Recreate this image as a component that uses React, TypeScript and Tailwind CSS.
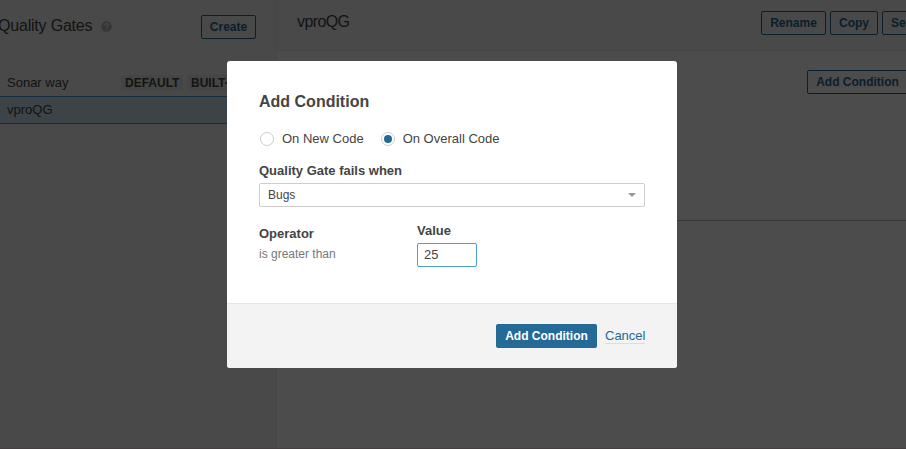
import type { ReactNode } from "react";

function OutlineButton({ children, className = "justify-center" }: { children: ReactNode; className?: string }) {
  return (
    <button
      className={`flex h-6 shrink-0 items-center whitespace-nowrap rounded-[2px] border border-[#236a97] text-xs font-bold text-[#236a97] ${className}`}
    >
      {children}
    </button>
  );
}

function Badge({ children, className = "" }: { children: ReactNode; className?: string }) {
  return (
    <span
      className={`flex h-4 shrink-0 items-center whitespace-nowrap rounded-[2px] bg-[#e6e6e6] pl-1 text-xs font-bold text-[#444] ${className}`}
    >
      {children}
    </span>
  );
}

function HelpIcon() {
  return (
    <svg className="ml-[9px] size-[11px]" viewBox="0 0 16 16">
      <circle cx="8" cy="8" r="7.6" fill="#b4b4b4" />
      <path d="M5.4 6.3C5.4 4.7 6.5 3.8 8 3.8s2.6.9 2.6 2.3C10.6 7.8 8 7.8 8 9.7" fill="none" stroke="#f3f3f3" strokeWidth="1.9" />
      <rect x="7" y="10.8" width="2" height="2" fill="#f3f3f3" />
    </svg>
  );
}

function Sidebar() {
  return (
    <aside className="flex w-[277px] shrink-0 flex-col border-r border-[#e6e6e6] bg-[#f3f3f3]">
      <div className="flex h-[69px] items-start justify-between pr-5 pt-[15px]">
        <div className="flex h-[22px] items-center">
          <h1 className="-ml-[2px] whitespace-nowrap text-base tracking-[-0.2px]">Quality Gates</h1>
          <HelpIcon />
        </div>
        <OutlineButton className="w-[55px] justify-center">Create</OutlineButton>
      </div>
      <div className="flex h-[27px] items-center pl-[7px]">
        <span className="w-[114px] shrink-0 text-[13px]">Sonar way</span>
        <Badge className="w-[62px]">DEFAULT</Badge>
        <Badge className="ml-1 w-[64px]">BUILT-IN</Badge>
      </div>
      <div className="flex h-7 items-center border-y border-[#4b9fd5] bg-[#cae3f2] pl-[7px] text-[13px]">vproQG</div>
    </aside>
  );
}

function GateDetails() {
  return (
    <main className="flex min-w-0 flex-1 flex-col overflow-hidden bg-white">
      <header className="flex h-[51px] items-start justify-between border-b border-[#e6e6e6] bg-[#f3f3f3] pl-5 pt-[11px]">
        <h2 className="text-base leading-[22px] tracking-[-0.6px]">vproQG</h2>
        <div className="-mr-[78px] flex gap-1">
          <OutlineButton className="w-[65px] justify-center">Rename</OutlineButton>
          <OutlineButton className="w-12 justify-center">Copy</OutlineButton>
          <OutlineButton className="w-[102px] justify-start pl-2">Set as Default</OutlineButton>
        </div>
      </header>
      <div className="flex h-[170px] justify-end border-b border-[#bbb] pt-[19px]">
        <OutlineButton className="-mr-[2px] w-[101px] justify-center">Add Condition</OutlineButton>
      </div>
    </main>
  );
}

function Radio({ label, checked = false }: { label: string; checked?: boolean }) {
  return (
    <label className="flex items-center text-[13px]">
      <span className="mr-2 flex size-[14px] items-center justify-center rounded-full border border-[#cdcdcd] bg-white">
        {checked && <span className="size-2 rounded-full bg-[#236a97]" />}
      </span>
      <span className="whitespace-nowrap">{label}</span>
    </label>
  );
}

function ConditionModal() {
  return (
    <section className="flex h-[307px] w-[450px] flex-col overflow-hidden rounded-[3px] bg-white">
      <div className="flex flex-1 flex-col px-8 pt-[31px]">
        <h2 className="text-base font-bold leading-5">Add Condition</h2>
        <div className="mt-[17px] flex h-5 items-center gap-[17px] pl-px">
          <Radio label="On New Code" />
          <Radio label="On Overall Code" checked />
        </div>
        <span className="mt-3 text-[13px] font-bold leading-5">Quality Gate fails when</span>
        <div className="mt-[2px] flex h-6 items-center justify-between rounded-[2px] border border-[#cdcdcd] pl-2 pr-2 text-xs">
          <span>Bugs</span>
          <span className="size-0 border-x-4 border-t-4 border-x-transparent border-t-[#999]" />
        </div>
        <div className="mt-[15px] flex">
          <div className="w-[158px] pt-[3px]">
            <div className="text-[13px] font-bold leading-[18px]">Operator</div>
            <div className="mt-[2px] text-xs leading-[18px] text-[#777]">is greater than</div>
          </div>
          <div>
            <div className="text-[13px] font-bold leading-[18px]">Value</div>
            <input
              className="mt-[3px] block h-6 w-[60px] rounded-[2px] border border-[#4b9fd5] px-1.5 pb-[2px] text-[13px] outline-none"
              defaultValue="25"
            />
          </div>
        </div>
      </div>
      <footer className="flex h-[65px] items-center justify-end border-t border-[#e6e6e6] bg-[#f3f3f3] pr-8">
        <button className="h-6 w-[101px] rounded-[2px] bg-[#236a97] text-xs font-bold text-white">Add Condition</button>
        <a className="ml-2 w-10 whitespace-nowrap border-b border-[#cae3f2] text-[13px] leading-[15px] text-[#236a97]">Cancel</a>
      </footer>
    </section>
  );
}

export default function App() {
  return (
    <div className="relative h-[449px] w-[906px] overflow-hidden font-['Liberation_Sans',Arial,sans-serif] text-[#444]">
      <div className="flex h-full">
        <Sidebar />
        <GateDetails />
      </div>
      <div className="absolute inset-0 flex items-start border-b border-[#443f41] bg-black/70 pl-[227px] pt-[61px]">
        <ConditionModal />
      </div>
    </div>
  );
}
